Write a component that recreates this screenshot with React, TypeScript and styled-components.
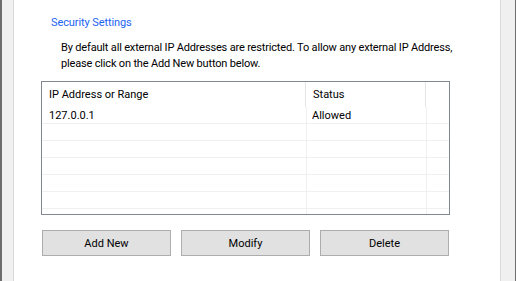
import React from "react";
import styled, { createGlobalStyle } from "styled-components";

const GlobalStyle = createGlobalStyle`
  html, body {
    margin: 0;
    padding: 0;
    background: #f0f0f0;
  }
  * { box-sizing: border-box; }
`;

const Window = styled.div`
  width: 516px;
  height: 281px;
  display: flex;
  background: #f0f0f0;
  border-left: 2px solid #6d6d6d;
  border-right: 1px solid #6d6d6d;
  padding-left: 11px;
  padding-right: 14px;
  font-family: Roboto, "Liberation Sans", Arial, sans-serif;
  font-size: 11px;
  color: #000;
  overflow: hidden;
`;

const Panel = styled.div`
  flex: 1;
  background: #fff;
  border-left: 1px solid #d9d9d9;
  border-right: 1px solid #d9d9d9;
  padding: 15px 0 0 27px;
`;

const Content = styled.div`
  width: 409px;
  display: flex;
  flex-direction: column;
`;

const Title = styled.div`
  margin-left: 10px;
  line-height: 16px;
  color: #1c64f2;
  letter-spacing: -0.1px;
`;

const Description = styled.p`
  margin: 9px 0 0 20px;
  line-height: 16px;
  white-space: nowrap;
  letter-spacing: -0.17px;
`;

const Grid = styled.div`
  margin-top: 9px;
  height: 134px;
  border: 1px solid #828790;
  overflow: hidden;
  display: flex;
  flex-direction: column;
`;

const HeaderRow = styled.div`
  display: grid;
  grid-template-columns: 264px 120px 1fr;
  height: 25px;
  flex-shrink: 0;
`;

const HeaderCell = styled.div<{ $last?: boolean }>`
  line-height: 25px;
  padding-left: ${(p) => (p.$last ? 0 : 7)}px;
  border-right: ${(p) => (p.$last ? "none" : "1px solid #e5e5e5")};
  white-space: nowrap;
`;

const Row = styled.div`
  display: grid;
  grid-template-columns: 265px 120px 1fr;
  height: 17px;
  flex-shrink: 0;
  border-bottom: 1px solid #f0f0f0;
`;

const Cell = styled.div<{ $pad?: number; $last?: boolean }>`
  line-height: 16px;
  padding-top: 1px;
  padding-left: ${(p) => p.$pad ?? 0}px;
  border-right: ${(p) => (p.$last ? "none" : "1px solid #f0f0f0")};
  white-space: nowrap;
`;

const ButtonBar = styled.div`
  margin-top: 15px;
  margin-left: 1px;
  display: grid;
  grid-template-columns: repeat(3, 129px);
  column-gap: 10px;
`;

const Button = styled.button`
  height: 26px;
  background: #e1e1e1;
  border: 1px solid #adadad;
  border-radius: 0;
  font-family: inherit;
  font-size: 11px;
  color: #000;
  padding: 0;
`;

const rows: { ip: string; status: string }[] = [
  { ip: "127.0.0.1", status: "Allowed" },
  { ip: "", status: "" },
  { ip: "", status: "" },
  { ip: "", status: "" },
  { ip: "", status: "" },
  { ip: "", status: "" },
  { ip: "", status: "" },
];

export default function App() {
  return (
    <>
      <GlobalStyle />
      <Window>
        <Panel>
          <Content>
            <Title>Security Settings</Title>
            <Description>
              By default all external IP Addresses are restricted. To allow any external IP Address,
              <br />
              please click on the Add New button below.
            </Description>
            <Grid>
              <HeaderRow>
                <HeaderCell>IP Address or Range</HeaderCell>
                <HeaderCell>Status</HeaderCell>
                <HeaderCell $last />
              </HeaderRow>
              {rows.map((r, i) => (
                <Row key={i}>
                  <Cell $pad={7}>{r.ip}</Cell>
                  <Cell $pad={5}>{r.status}</Cell>
                  <Cell $last />
                </Row>
              ))}
            </Grid>
            <ButtonBar>
              <Button>Add New</Button>
              <Button>Modify</Button>
              <Button>Delete</Button>
            </ButtonBar>
          </Content>
        </Panel>
      </Window>
    </>
  );
}
